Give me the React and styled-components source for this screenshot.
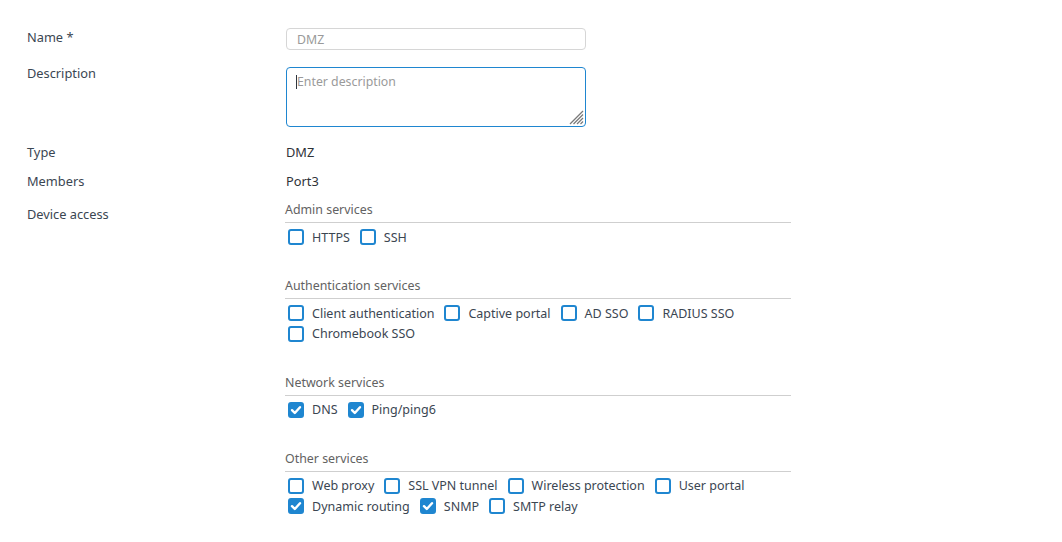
import React from "react";
import styled, { createGlobalStyle } from "styled-components";

const Global = createGlobalStyle`
  html, body { margin: 0; padding: 0; background: #fff; }
  body { font-family: "Noto Sans", "Open Sans", sans-serif; color: #3b4652; }
  * { box-sizing: border-box; }
`;

const Page = styled.div`
  width: 1062px;
  min-height: 542px;
  padding: 28px 0 0 27px;
`;

const Row = styled.div`
  display: grid;
  grid-template-columns: 259px 505px;
  margin-top: ${(p) => p.$mt || 0}px;
`;

const Label = styled.div`
  font-size: 12.8px;
  line-height: 18px;
  color: #3b4652;
  margin-top: ${(p) => p.$offset || 0}px;
`;

const Value = styled.div`
  font-size: 12.8px;
  line-height: 18px;
  color: #2f3338;
`;

const TextInput = styled.input`
  display: block;
  width: 300px;
  height: 22px;
  border: 1px solid #d6d6d6;
  border-radius: 4px;
  padding: 0 10px;
  font-family: inherit;
  font-size: 12.3px;
  color: #9a9a9a;
  outline: none;
  background: #fff;
`;

const AreaWrap = styled.div`
  position: relative;
  width: 300px;
  height: 60px;
`;

const Area = styled.textarea`
  display: block;
  width: 300px;
  height: 60px;
  border: 1px solid #1f86d0;
  border-radius: 4px;
  padding: 6px 10px;
  font-family: inherit;
  font-size: 12.3px;
  line-height: 16px;
  color: #333;
  outline: none;
  resize: none;
  &::placeholder { color: #9a9a9a; }
`;

const Caret = styled.span`
  position: absolute;
  left: 10px;
  top: 8px;
  width: 1px;
  height: 14px;
  background: #2d3540;
`;

const Grip = styled.svg`
  position: absolute;
  right: 2px;
  bottom: 2px;
`;

const Section = styled.div`
  margin-left: -1px;
  margin-top: ${(p) => p.$mt || 0}px;
`;

const Heading = styled.div`
  height: 23px;
  padding-top: 1px;
  font-size: 12.4px;
  line-height: 18px;
  color: #626262;
  border-bottom: 1px solid #cfcfcf;
`;

const Options = styled.div`
  display: flex;
  flex-wrap: wrap;
  row-gap: 0.5px;
  margin-top: 4px;
`;

const Option = styled.label`
  display: flex;
  align-items: center;
  height: 20px;
  margin: 0 7px 0 3px;
  font-size: 12.5px;
  color: #3b4652;
  white-space: nowrap;
`;

const Box = styled.span`
  width: 16px;
  height: 16px;
  border: 2px solid #1f86d0;
  border-radius: 3px;
  background: ${(p) => (p.$checked ? "#1f86d0" : "#fff")};
  margin-right: 8px;
  display: flex;
  align-items: center;
  justify-content: center;
  flex-shrink: 0;
`;

const Check = () => (
  <svg width="12" height="12" viewBox="0 0 12 12">
    <path d="M2 6.2 L4.8 9 L10 3.2" fill="none" stroke="#fff" strokeWidth="2.4" strokeLinecap="round" strokeLinejoin="round" />
  </svg>
);

const Checkbox = ({ label, checked }) => (
  <Option>
    <Box $checked={checked}>{checked && <Check />}</Box>
    {label}
  </Option>
);

const sections = [
  { title: "Admin services", items: [["HTTPS"], ["SSH"]] },
  {
    title: "Authentication services",
    items: [["Client authentication"], ["Captive portal"], ["AD SSO"], ["RADIUS SSO"], ["Chromebook SSO"]],
  },
  { title: "Network services", items: [["DNS", true], ["Ping/ping6", true]] },
  {
    title: "Other services",
    items: [
      ["Web proxy"],
      ["SSL VPN tunnel"],
      ["Wireless protection"],
      ["User portal"],
      ["Dynamic routing", true],
      ["SNMP", true],
      ["SMTP relay"],
    ],
  },
];

export default function App() {
  return (
    <Page>
      <Global />
      <Row>
        <Label>Name *</Label>
        <div>
          <TextInput defaultValue="DMZ" readOnly />
        </div>
      </Row>
      <Row $mt={17}>
        <Label $offset={-3}>Description</Label>
        <AreaWrap>
          <Area placeholder="Enter description" />
          <Caret />
          <Grip width="15" height="15" viewBox="0 0 15 15">
            <g stroke="#7a7a7a" strokeWidth="1.3">
              <line x1="1" y1="14" x2="14" y2="1" />
              <line x1="4.5" y1="14" x2="14" y2="4.5" />
              <line x1="8" y1="14" x2="14" y2="8" />
              <line x1="11.5" y1="14" x2="14" y2="11.5" />
            </g>
          </Grip>
        </AreaWrap>
      </Row>
      <Row $mt={16}>
        <Label>Type</Label>
        <Value>DMZ</Value>
      </Row>
      <Row $mt={11}>
        <Label>Members</Label>
        <Value>Port3</Value>
      </Row>
      <Row $mt={10}>
        <Label $offset={5}>Device access</Label>
        <div>
          {sections.map((s, i) => (
            <Section key={s.title} $mt={i === 0 ? 0 : 29}>
              <Heading>{s.title}</Heading>
              <Options>
                {s.items.map(([l, c]) => (
                  <Checkbox key={l} label={l} checked={!!c} />
                ))}
              </Options>
            </Section>
          ))}
        </div>
      </Row>
    </Page>
  );
}
